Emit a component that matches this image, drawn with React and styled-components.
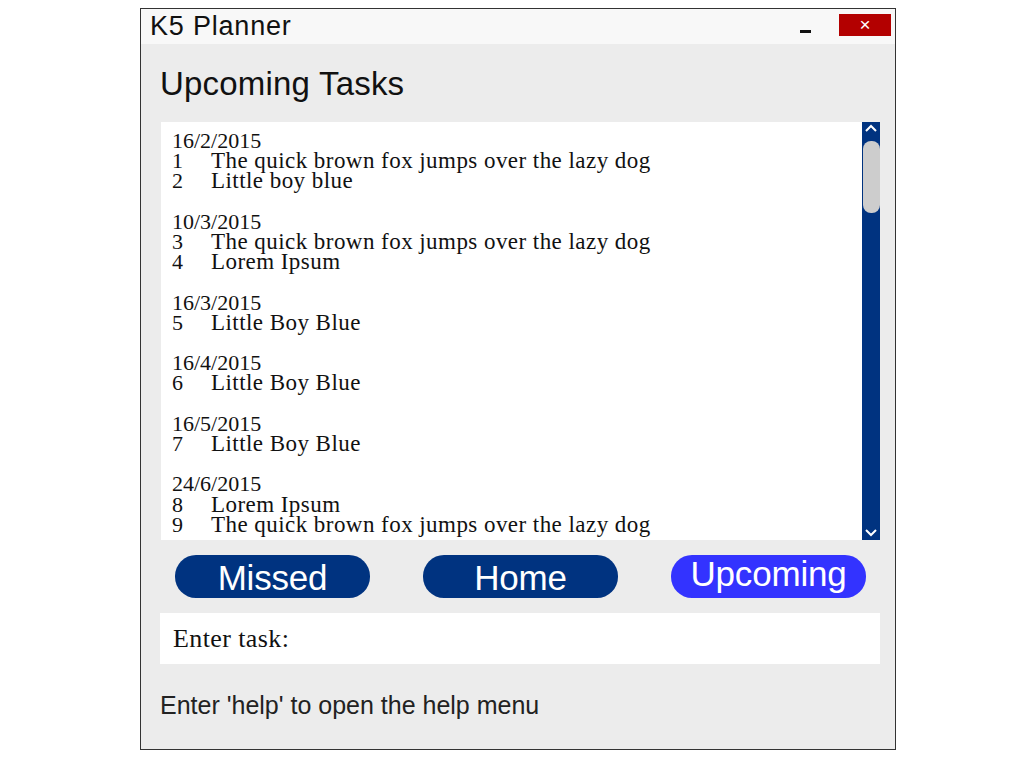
import React from "react";
import styled, { createGlobalStyle } from "styled-components";

const GlobalStyle = createGlobalStyle`
  html, body {
    margin: 0;
    padding: 0;
    background: #ffffff;
  }
  body {
    font-family: "Liberation Sans", Arial, sans-serif;
  }
`;

const Window = styled.div`
  width: 754px;
  height: 740px;
  margin: 8px 0 0 140px;
  border: 1px solid #333;
  background: #ececec;
  display: flex;
  flex-direction: column;
`;

const TitleBar = styled.div`
  height: 35px;
  background: #f8f8f8;
  display: flex;
  align-items: center;
  padding: 0 4px 0 9px;
`;

const AppName = styled.div`
  flex: 1;
  font-size: 27px;
  color: #111;
  letter-spacing: 0.8px;
`;

const MinButton = styled.div`
  width: 11px;
  height: 3px;
  background: #111;
  margin: 10px 28px 0 0;
`;

const CloseButton = styled.div`
  width: 52px;
  height: 22px;
  background: #b30000;
  color: #fff;
  font-size: 19px;
  line-height: 22px;
  text-align: center;
  margin-top: -4px;
`;

const Body = styled.div`
  flex: 1;
  display: flex;
  flex-direction: column;
  padding: 0 15px 0 19px;
`;

const Heading = styled.h1`
  margin: 0;
  height: 78px;
  line-height: 80px;
  font-size: 33px;
  font-weight: normal;
  color: #111;
  letter-spacing: 0.2px;
`;

const ListPanel = styled.div`
  height: 418px;
  display: flex;
  margin-left: 1px;
`;

const ListContent = styled.div`
  flex: 1;
  background: #fff;
  overflow: hidden;
  padding: 9px 12px 0 11px;
  font-family: "Liberation Serif", "Times New Roman", serif;
  font-size: 22px;
  line-height: 20.2px;
  color: #111;
`;

const Group = styled.div`
  margin-bottom: 20.2px;
`;

const Row = styled.div`
  display: flex;
  white-space: nowrap;
`;

const Num = styled.span`
  width: 39px;
  flex: none;
`;

const TaskText = styled.span`
  font-size: 23px;
  letter-spacing: 0.45px;
`;

const ScrollBar = styled.div`
  width: 18px;
  background: #003380;
  display: flex;
  flex-direction: column;
  align-items: center;
  justify-content: space-between;
  position: relative;
`;

const Thumb = styled.div`
  position: absolute;
  top: 19px;
  left: 1px;
  width: 17px;
  height: 72px;
  background: #cdcdcd;
  border-radius: 8px;
`;

const Chevron = styled.svg`
  width: 14px;
  height: 10px;
  margin: ${(p) => (p.$down ? "0 0 2px" : "1px 0 0")};
`;

const ButtonRow = styled.div`
  display: flex;
  justify-content: space-between;
  padding: 0 14px 0 15px;
  margin-top: 15px;
`;

const NavButton = styled.div`
  width: 195px;
  height: 43px;
  border-radius: 21px;
  background: ${(p) => (p.$active ? "#3333ff" : "#003380")};
  color: #fff;
  font-size: 35px;
  text-align: center;
  line-height: ${(p) => (p.$active ? "38px" : "46px")};
  letter-spacing: -0.2px;
  overflow: hidden;
`;

const InputBox = styled.div`
  margin-top: 15px;
  height: 51px;
  background: #fff;
  display: flex;
  align-items: center;
  padding-left: 13px;
  font-family: "Liberation Serif", "Times New Roman", serif;
  font-size: 26px;
  letter-spacing: 0.4px;
  color: #111;
`;

const HelpText = styled.div`
  margin-top: 27px;
  font-size: 25px;
  color: #222;
`;

const groups = [
  { date: "16/2/2015", tasks: [[1, "The quick brown fox jumps over the lazy dog"], [2, "Little boy blue"]] },
  { date: "10/3/2015", tasks: [[3, "The quick brown fox jumps over the lazy dog"], [4, "Lorem Ipsum"]] },
  { date: "16/3/2015", tasks: [[5, "Little Boy Blue"]] },
  { date: "16/4/2015", tasks: [[6, "Little Boy Blue"]] },
  { date: "16/5/2015", tasks: [[7, "Little Boy Blue"]] },
  { date: "24/6/2015", tasks: [[8, "Lorem Ipsum"], [9, "The quick brown fox jumps over the lazy dog"]] },
];

export default function App() {
  return (
    <>
      <GlobalStyle />
      <Window>
        <TitleBar>
          <AppName>K5 Planner</AppName>
          <MinButton />
          <CloseButton>×</CloseButton>
        </TitleBar>
        <Body>
          <Heading>Upcoming Tasks</Heading>
          <ListPanel>
            <ListContent>
              {groups.map((g) => (
                <Group key={g.date}>
                  <div>{g.date}</div>
                  {g.tasks.map(([n, t]) => (
                    <Row key={n}>
                      <Num>{n}</Num>
                      <TaskText>{t}</TaskText>
                    </Row>
                  ))}
                </Group>
              ))}
            </ListContent>
            <ScrollBar>
              <Chevron viewBox="0 0 14 10">
                <path d="M2 8 L7 3 L12 8" stroke="#fff" strokeWidth="2" fill="none" />
              </Chevron>
              <Thumb />
              <Chevron $down viewBox="0 0 14 10">
                <path d="M2 2 L7 7 L12 2" stroke="#fff" strokeWidth="2" fill="none" />
              </Chevron>
            </ScrollBar>
          </ListPanel>
          <ButtonRow>
            <NavButton>Missed</NavButton>
            <NavButton>Home</NavButton>
            <NavButton $active>Upcoming</NavButton>
          </ButtonRow>
          <InputBox>Enter task:</InputBox>
          <HelpText>Enter 'help' to open the help menu</HelpText>
        </Body>
      </Window>
    </>
  );
}
